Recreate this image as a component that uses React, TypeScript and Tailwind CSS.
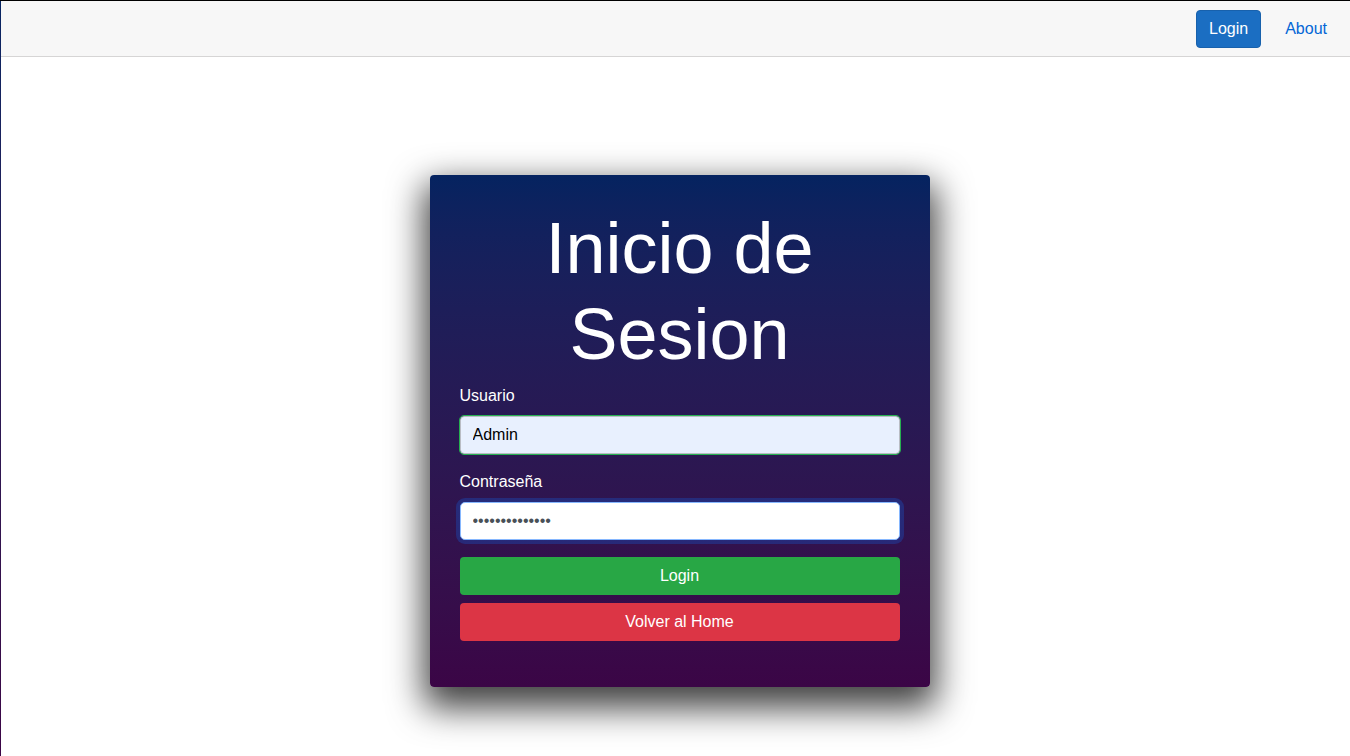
import React from 'react';

const font = { fontFamily: '"Liberation Sans", Arial, Helvetica, sans-serif' };

export default function App() {
  return (
    <div className="flex min-h-[756px] border-t border-black bg-white" style={font}>
      {/* franja lateral izquierda */}
      <div className="w-px shrink-0 bg-gradient-to-b from-[#062562] to-[#3b0546]" />

      <div className="flex flex-1 flex-col">
        {/* barra superior */}
        <div className="flex h-[56px] items-center justify-end border-b border-[#d6d5d5] bg-[#f7f7f7] pr-[23px]">
          <button className="h-[38px] rounded-[4px] border border-[#1861ac] bg-[#1b6ec2] px-3 text-base text-white">
            Login
          </button>
          <a href="#" className="ml-6 text-base text-[#0366d6]">
            About
          </a>
        </div>

        {/* tarjeta de login */}
        <div className="flex justify-center pl-2 pt-[118px]">
          <div className="w-[500px] rounded-[4px] bg-gradient-to-b from-[#052360] to-[#3b0546] px-[30px] pb-[46px] pt-[30px] shadow-[0_15px_35px_6px_rgba(0,0,0,0.75)]">
            <h1 className="text-center text-[72px] leading-[1.2] text-white">
              Inicio de Sesion
            </h1>

            <div className="mt-1.5">
              <label className="mb-2 block text-base leading-6 text-white">Usuario</label>
              <input
                type="text"
                defaultValue="Admin"
                className="block h-[38px] w-full rounded-[4px] border border-[#b9bcc4] bg-[#e8f0fe] px-3 text-base text-black outline outline-1 outline-[#26b050]"
              />
            </div>

            <div className="mt-4">
              <label className="mb-2 block text-base leading-6 text-white">Contraseña</label>
              <input
                type="password"
                defaultValue="12345678901234"
                className="block h-[38px] w-full rounded-[5px] border border-[#86b7fe] bg-white px-3 text-base text-[#495057] shadow-[0_0_0_4px_rgba(13,110,253,0.25)] outline-none"
              />
            </div>

            <button className="mt-[17px] block h-[38px] w-full rounded-[4px] bg-[#28a745] text-base text-white">
              Login
            </button>
            <button className="mt-2 block h-[38px] w-full rounded-[4px] bg-[#dc3545] text-base text-white">
              Volver al Home
            </button>
          </div>
        </div>
      </div>
    </div>
  );
}
